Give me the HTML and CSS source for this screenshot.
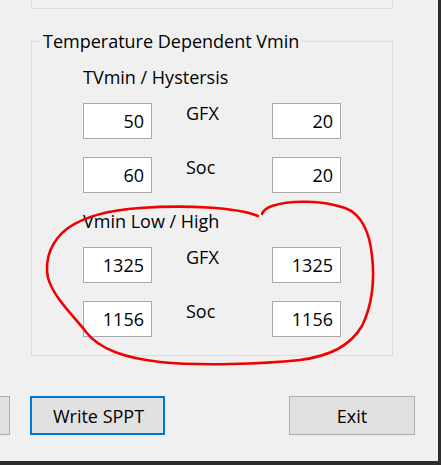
FILE: index.html
```html
<!DOCTYPE html>
<html lang="en">
<head>
  <meta charset="UTF-8">
  <title>Temperature Dependent Vmin</title>
  <link rel="stylesheet" href="styles.css">
</head>
<body>
  <div class="window">
    <div class="group-top"></div>

    <fieldset class="group">
      <legend>Temperature Dependent Vmin</legend>

      <div class="section">
        <div class="caption">TVmin / Hystersis</div>
        <div class="rows">
          <input class="num" type="text" value="50">
          <span class="label">GFX</span>
          <input class="num" type="text" value="20">
          <input class="num" type="text" value="60">
          <span class="label">Soc</span>
          <input class="num" type="text" value="20">
        </div>
      </div>

      <div class="section">
        <div class="caption">Vmin Low / High</div>
        <div class="rows">
          <input class="num" type="text" value="1325">
          <span class="label">GFX</span>
          <input class="num" type="text" value="1325">
          <input class="num" type="text" value="1156">
          <span class="label">Soc</span>
          <input class="num" type="text" value="1156">
        </div>
      </div>
    </fieldset>

    <div class="buttons">
      <button class="btn cut"></button>
      <button class="btn focus">Write SPPT</button>
      <button class="btn exit">Exit</button>
    </div>

    <!-- red marker scribble drawn over the dialog -->
    <svg class="scribble" width="441" height="465" viewBox="0 0 441 465">
      <path d="M258,216 C236,207 185,205 140,208 C110,210 84,217 68,228 C52,240 44,258 48,278 C54,298 72,314 86,332 C100,350 126,358 160,362 C200,366 262,364 300,360 C330,356 350,346 362,326 C372,306 375,280 372,256 C370,234 362,214 345,208 C322,200 290,200 272,206 C266,208 263,211 262,214"
            fill="none" stroke="#f00000" stroke-width="2.6" stroke-linecap="round"/>
    </svg>
  </div>
</body>
</html>
```

FILE: styles.css
```css
body {
  margin: 0;
  background: #2d2d2d;
  font-family: 'Open Sans', 'Noto Sans', sans-serif;
  font-size: 18px;
  color: #000;
}
.window {
  position: relative;
  width: 438px;
  height: 461px;
  background: #f0f0f0;
  overflow: hidden;
}
.group-top {
  box-sizing: border-box;
  width: 362px;
  height: 9px;
  margin-left: 31px;
  border: 1px solid #dcdcdc;
  border-top: none;
}
.group {
  box-sizing: border-box;
  width: 362px;
  height: 327px;
  margin: 20px 0 0 31px;
  padding: 0;
  border: 1px solid #dcdcdc;
}
.group legend {
  margin-left: 8px;
  padding: 0 3px;
  line-height: 24px;
}
.section {
  display: flex;
  flex-direction: column;
  padding-left: 51px;
}
.caption {
  line-height: 24px;
  margin-top: 12px;
}
.rows {
  display: grid;
  grid-template-columns: 69px 120px 69px;
  grid-auto-rows: 36px;
  row-gap: 18px;
  margin-top: 14px;
}
.num {
  box-sizing: border-box;
  width: 69px;
  height: 36px;
  margin: 0;
  padding: 0 7px 0 0;
  border: 1px solid #a9a9a9;
  background: #fff;
  font: inherit;
  color: #000;
  text-align: right;
}
.label {
  padding-left: 34px;
  line-height: 20px;
}
.section + .section .caption {
  margin-top: 16px;
}
.buttons {
  display: flex;
  margin-top: 40px;
}
.btn {
  box-sizing: border-box;
  height: 39px;
  margin: 0;
  border: 1px solid #adadad;
  background: #e1e1e1;
  font: inherit;
  color: #000;
}
.cut {
  width: 60px;
  margin-left: -50px;
}
.focus {
  width: 135px;
  margin-left: 20px;
  padding-right: 4px;
  border: 2px solid #0078d7;
}
.exit {
  width: 126px;
  margin-left: 124px;
}
.scribble {
  position: absolute;
  left: 0;
  top: 0;
  pointer-events: none;
}
```
